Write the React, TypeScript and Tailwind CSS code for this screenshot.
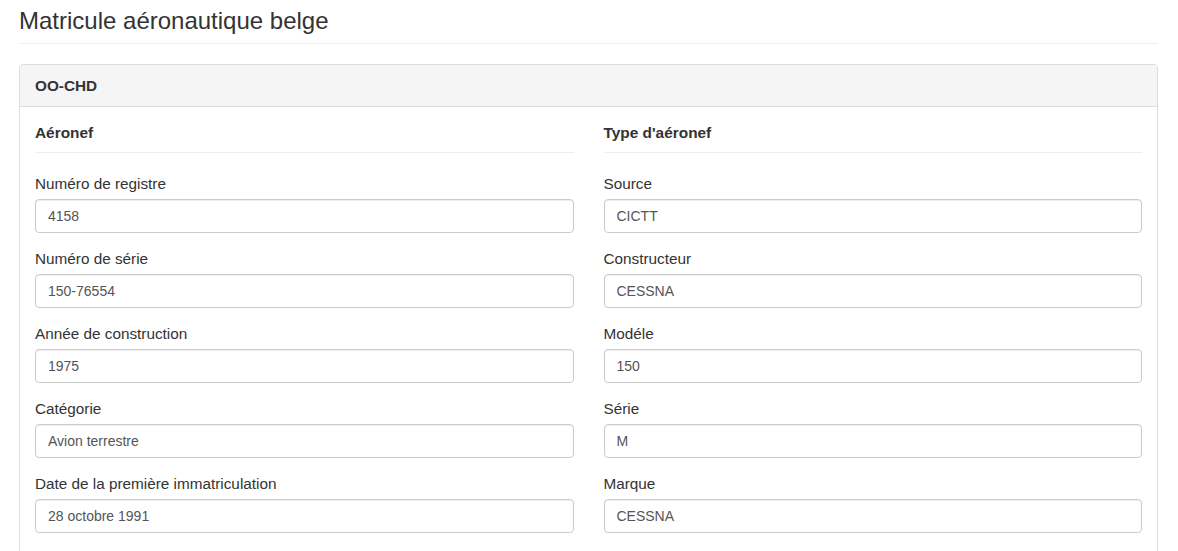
import React from "react"

const aircraft = [
  { label: "Numéro de registre", value: "4158" },
  { label: "Numéro de série", value: "150-76554" },
  { label: "Année de construction", value: "1975" },
  { label: "Catégorie", value: "Avion terrestre" },
  { label: "Date de la première immatriculation", value: "28 octobre 1991" },
]

const aircraftType = [
  { label: "Source", value: "CICTT" },
  { label: "Constructeur", value: "CESSNA" },
  { label: "Modéle", value: "150" },
  { label: "Série", value: "M" },
  { label: "Marque", value: "CESSNA" },
]

function Field({ label, value }: { label: string; value: string }) {
  return (
    <div className="mb-[15px]">
      <label className="block h-[21px] leading-[21px] mb-[5px] text-[15.3px] text-[#333]">{label}</label>
      <input
        type="text"
        readOnly
        value={value}
        className="block w-full h-[34px] px-[12px] border border-[#ccc] rounded-[4px] bg-white text-[14px] text-[#555] shadow-[inset_0_1px_1px_rgba(0,0,0,0.075)] outline-none"
      />
    </div>
  )
}

function Section({ title, fields }: { title: string; fields: { label: string; value: string }[] }) {
  return (
    <div className="px-[15px]">
      <h4 className="h-[31px] leading-[21px] pb-[10px] border-b border-[#eee] mb-[20px] text-[15.4px] font-bold text-[#333]">
        {title}
      </h4>
      {fields.map((f) => (
        <Field key={f.label} label={f.label} value={f.value} />
      ))}
    </div>
  )
}

export default function App() {
  return (
    <div className="min-h-screen bg-white pl-[19px] pr-[20px] font-['Liberation_Sans',Arial,sans-serif] text-[#333]">
      <h1 className="pt-[8px] pb-[9px] border-b border-[#eee] mb-[20px] text-[24px] leading-[26px] font-normal">
        Matricule aéronautique belge
      </h1>
      <div className="border border-[#ddd] rounded-[4px]">
        <div className="h-[42px] bg-[#f5f5f5] border-b border-[#ddd] px-[15px] flex items-center rounded-t-[3px]">
          <h3 className="text-[15.3px] font-bold leading-[20px]">OO-CHD</h3>
        </div>
        <div className="p-[15px]">
          <div className="grid grid-cols-2 -mx-[15px]">
            <Section title="Aéronef" fields={aircraft} />
            <Section title="Type d'aéronef" fields={aircraftType} />
          </div>
        </div>
      </div>
    </div>
  )
}
